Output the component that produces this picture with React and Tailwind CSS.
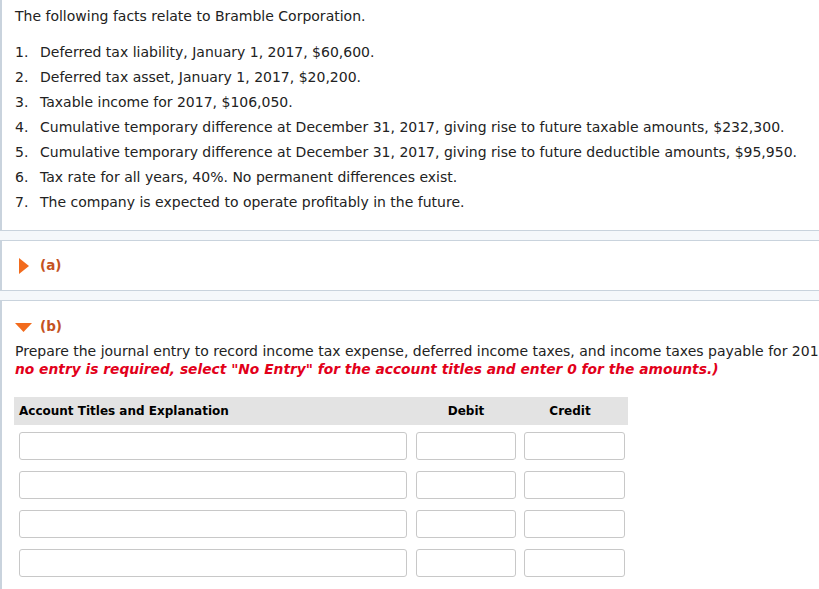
import React from 'react'

const FACTS = [
  'Deferred tax liability, January 1, 2017, $60,600.',
  'Deferred tax asset, January 1, 2017, $20,200.',
  'Taxable income for 2017, $106,050.',
  'Cumulative temporary difference at December 31, 2017, giving rise to future taxable amounts, $232,300.',
  'Cumulative temporary difference at December 31, 2017, giving rise to future deductible amounts, $95,950.',
  'Tax rate for all years, 40%. No permanent differences exist.',
  'The company is expected to operate profitably in the future.',
]

const ROWS = [0, 1, 2, 3]

const Band = () => (
  <div className="h-[10px] bg-[#f5f8fb] border-b border-[#c9d3dd]" />
)

export default function App() {
  return (
    <div
      className="w-full h-[589px] overflow-hidden bg-white text-[14px] text-[#222]"
      style={{ fontFamily: "'DejaVu Sans', Verdana, sans-serif" }}
    >
      {/* facts */}
      <div className="h-[231px] border-l-2 border-b border-[#c9d3dd] pt-[7px] pl-[13px]">
        <p className="leading-[18px]">The following facts relate to Bramble Corporation.</p>
        <ol className="mt-[15px]">
          {FACTS.map((f, i) => (
            <li key={i} className="flex h-[25px] leading-[25px] whitespace-nowrap">
              <span className="w-[25px] shrink-0">{i + 1}.</span>
              <span>{f}</span>
            </li>
          ))}
        </ol>
      </div>

      <Band />

      {/* part a */}
      <div className="h-[50px] border-l-2 border-b border-[#c9d3dd] flex items-center pl-[17px] gap-[11px]">
        <svg width="10" height="16" viewBox="0 0 10 16" className="mt-[1px]">
          <path d="M0 0 L10 8 L0 16 Z" fill="#f26b1d" />
        </svg>
        <span className="font-bold text-[13.5px] text-[#c4531f]">(a)</span>
      </div>

      <Band />

      {/* part b */}
      <div className="border-l-2 border-[#c9d3dd] pl-[13px] pt-[16px] h-[300px]">
        <div className="flex items-center gap-[8px] h-[18px]">
          <svg width="17" height="9" viewBox="0 0 17 9" className="mt-[2px]">
            <path d="M0 0 L17 0 L8.5 9 Z" fill="#f26b1d" />
          </svg>
          <span className="font-bold text-[13.5px] text-[#c4531f]">(b)</span>
        </div>
        <p className="mt-[7px] leading-[18px] whitespace-nowrap">
          Prepare the journal entry to record income tax expense, deferred income taxes, and income taxes payable for 2017. (Credit account titles are automatically indented when amount is entered. Do not indent manually. If
        </p>
        <p className="leading-[18px] whitespace-nowrap font-bold italic text-[13.8px] text-[#e2001a]">
          no entry is required, select "No Entry" for the account titles and enter 0 for the amounts.)
        </p>

        <div className="mt-[19px] -ml-[1px] w-[614px]">
          <div className="h-[28px] bg-[#e3e3e3] flex items-center font-bold text-[12px] text-black">
            <div className="w-[400px] pl-[5px]">Account Titles and Explanation</div>
            <div className="w-[104px] text-center">Debit</div>
            <div className="w-[104px] text-center">Credit</div>
          </div>
          <div className="pl-[5px] pt-[7px] flex flex-col gap-[11px]">
            {ROWS.map((r) => (
              <div key={r} className="flex h-[28px]">
                <div className="w-[388px] border border-[#c8c8c8] rounded-[3px]" />
                <div className="w-[100px] ml-[9px] border border-[#c8c8c8] rounded-[3px]" />
                <div className="w-[101px] ml-[8px] border border-[#c8c8c8] rounded-[3px]" />
              </div>
            ))}
          </div>
        </div>
      </div>
    </div>
  )
}
